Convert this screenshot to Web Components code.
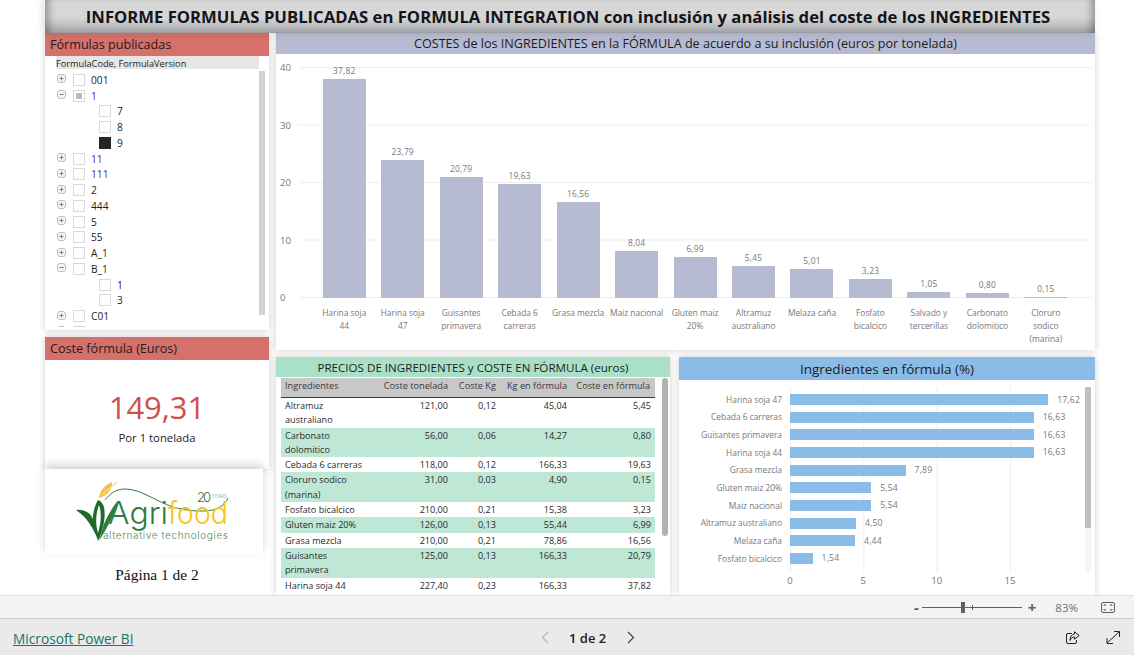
<!DOCTYPE html>
<html lang="es">
<head>
<meta charset="utf-8">
<title>Informe formulas</title>
<style>
    html, body { margin: 0; padding: 0; background: #fff; }
    body { font-family: "Open Sans", "Noto Sans", sans-serif; color: #222; width: 1134px; height: 655px; overflow: hidden; }
</style>
</head>
<body>
<report-canvas>
    <report-title slot="title">INFORME FORMULAS PUBLICADAS en FORMULA INTEGRATION con inclusión y análisis del coste de los INGREDIENTES</report-title>

    <left-column slot="left">
        <visual-panel style="--head-bg:#d5706a; --head-h:23px; --head-size:12.6px; --head-align:flex-start; height:297px">
            <span slot="head">Fórmulas publicadas</span>
            <tree-slicer></tree-slicer>
        </visual-panel>
        <visual-panel style="--head-bg:#d5706a; --head-h:23px; --head-size:12.6px; --head-align:flex-start; height:132px">
            <span slot="head">Coste fórmula (Euros)</span>
            <kpi-card value="149,31" note="Por 1 tonelada"></kpi-card>
        </visual-panel>
        <logo-card></logo-card>
        <page-note>Página 1 de 2</page-note>
    </left-column>

    <visual-panel slot="top" style="--head-bg:#b7bbd1; --head-h:21px; --head-size:12.6px; height:317px">
        <span slot="head">COSTES de los INGREDIENTES en la FÓRMULA de acuerdo a su inclusión (euros por tonelada)</span>
        <column-chart></column-chart>
    </visual-panel>

    <visual-panel slot="table" style="--head-bg:#a9e0c7; --head-h:20px; --head-size:11.6px; width:394px; height:238px">
        <span slot="head">PRECIOS DE INGREDIENTES y COSTE EN FÓRMULA (euros)</span>
        <cost-table></cost-table>
    </visual-panel>

    <visual-panel slot="bars" style="--head-bg:#8bbce8; --head-h:23px; --head-size:13.5px; width:416px; height:238px">
        <span slot="head">Ingredientes en fórmula (%)</span>
        <bar-chart></bar-chart>
    </visual-panel>
</report-canvas>
<zoom-bar></zoom-bar>
<page-footer></page-footer>

<script>
const define = (name, css, html, setup) => {
    customElements.define(name, class extends HTMLElement {
        connectedCallback() {
            if (this.shadowRoot) return
            const root = this.attachShadow({ mode: 'open' })
            root.innerHTML = `<style>${css}</style>${html}`
            if (setup) setup(root, this)
        }
    })
}

define('report-canvas', `
    :host { display: grid; grid-template-columns: 224px 819px; column-gap: 7px; grid-template-rows: 33px 317px 245px; width: 1050px; height: 595px; margin-left: 45px; }
    .title { grid-column: 1 / 3; }
    .left { grid-row: 2 / 4; grid-column: 1; }
    .top { grid-column: 2; }
    .bottom { grid-column: 2; display: flex; gap: 9px; padding-top: 7px; height: 238px; }
`, `
    <div class="title"><slot name="title"></slot></div>
    <div class="left"><slot name="left"></slot></div>
    <div class="top"><slot name="top"></slot></div>
    <div class="bottom"><slot name="table"></slot><slot name="bars"></slot></div>
`)

define('report-title', `
    :host { display: flex; align-items: center; justify-content: center; height: 33px; white-space: nowrap; padding-right: 4px;
        font-size: 16.68px; font-weight: 700; color: #14151a; position: relative; z-index: 2;
        background: linear-gradient(#d8d8d8 0, #d6d6d6 55%, #a2a3a7 100%);
        box-shadow: inset 9px 0 9px -6px rgba(0,0,0,.35), inset -9px 0 9px -6px rgba(0,0,0,.35), -3px 0 8px rgba(0,0,0,.12); }
`, `<slot></slot>`)

define('left-column', `
    :host { display: flex; flex-direction: column; gap: 7px; height: 562px; }
    ::slotted(*) { flex: none; }
    ::slotted(logo-card) { margin-top: -7px; }
    ::slotted(page-note) { margin-top: -7px; }
`, `<slot></slot>`)

define('visual-panel', `
    :host { display: flex; flex-direction: column; background: #fff; box-shadow: 0 0 7px rgba(0,0,0,.2); overflow: hidden; }
    header { flex: none; height: var(--head-h); background: var(--head-bg); display: flex; align-items: center;
        justify-content: var(--head-align, center); padding: 0 5px; font-size: var(--head-size); color: #1d1d22; white-space: nowrap; }
    main { flex: 1; min-height: 0; }
`, `<header><slot name="head"></slot></header><main><slot></slot></main>`)

const plus = '<svg width="9" height="9" viewBox="0 0 9 9"><rect x=".5" y=".5" width="8" height="8" rx="2.5" fill="#f4f4f4" stroke="#bdbdbd"/><path d="M2.5 4.5h4M4.5 2.5v4" stroke="#808080"/></svg>'
const minus = '<svg width="9" height="9" viewBox="0 0 9 9"><rect x=".5" y=".5" width="8" height="8" rx="2.5" fill="#f4f4f4" stroke="#bdbdbd"/><path d="M2.5 4.5h4" stroke="#808080"/></svg>'

const treeRows = [
    ['001', 0, 'plus'], ['1', 0, 'minus', 'part', 'v'], ['7', 1], ['8', 1], ['9', 1, '', 'on'],
    ['11', 0, 'plus', '', 'v'], ['111', 0, 'plus', '', 'v'], ['2', 0, 'plus'], ['444', 0, 'plus'], ['5', 0, 'plus'],
    ['55', 0, 'plus'], ['A_1', 0, 'plus'], ['B_1', 0, 'minus'], ['1', 1], ['3', 1], ['C01', 0, 'plus'], ['', 0, 'plus']
]

define('tree-slicer', `
    :host { display: grid; grid-template-columns: 203px 6px; padding-left: 11px; height: 274px; overflow: hidden; grid-template-rows: 13px 1fr; font-size: 10.2px; color: #1f1f1f; }
    .cap { grid-column: 1; background: #e6e6e6; line-height: 15px; height: 13px; font-size: 9.2px; white-space: nowrap; }
    .list { grid-column: 1; grid-row: 2; padding: 3px 0 0 1px; height: 255px; overflow: hidden; }
    .bar { grid-column: 2; grid-row: 2; margin-top: 2px; height: 244px; background: #d2d2d2; }
    .row { display: flex; align-items: center; height: 15.75px; }
    .row.child { padding-left: 42px; }
    .exp { width: 9px; height: 9px; margin-right: 7px; display: flex; margin-top: -2px; }
    .box { width: 10px; height: 10px; border: 1px solid #d9d9d9; margin-right: 6px; display: flex; align-items: center; justify-content: center; }
    .box.part::after { content: ''; width: 6px; height: 6px; background: #bdbdbd; }
    .box.on { background: #252525; border-color: #252525; }
    .v { color: #4d2a80; }
`, `
    <div class="cap">FormulaCode, FormulaVersion</div>
    <div class="list"></div>
    <div class="bar"></div>
`, root => {
    const list = root.querySelector('.list')
    treeRows.forEach(([text, child, exp, state, tone]) => {
        const row = document.createElement('div')
        row.className = child ? 'row child' : 'row'
        const icon = exp === 'plus' ? plus : exp === 'minus' ? minus : ''
        row.innerHTML = `${child ? '' : `<span class="exp">${icon}</span>`}<span class="box ${state || ''}"></span><span class="${tone || ''}">${text}</span>`
        list.appendChild(row)
    })
})

define('kpi-card', `
    :host { display: flex; flex-direction: column; align-items: center; padding-top: 27px; }
    b { font-weight: 400; font-size: 31px; line-height: 40px; color: #cf5049; }
    span { font-size: 11.3px; line-height: 16px; color: #222; margin-top: 3px; }
`, `<b></b><span></span>`, (root, host) => {
    root.querySelector('b').textContent = host.getAttribute('value')
    root.querySelector('span').textContent = host.getAttribute('note')
})

define('logo-card', `
    :host { display: block; width: 218px; height: 86px; background: #fff; position: relative; box-shadow: 0 -4px 8px rgba(0,0,0,.18); }
    svg { display: block; }
    text { font-family: "Inter", "Liberation Sans", sans-serif; font-weight: 300; }
`, `
    <svg width="218" height="86" viewBox="0 0 218 86">
        <path d="M60 31C65 25 70 20 80 20C96 20 110 32 128 38C142 42 156 43 168 41C175 39 180 35 183 29" fill="none" stroke="#2f7d3b" stroke-width="1"/>
        <path d="M54 29C55 21 60 16 67 13C68 20 62 27 54 29Z" fill="#f0c24a"/>
        <path d="M58 25L72 13" stroke="#f6dc8e" stroke-width="1.5"/>
        <path d="M31 41C38 40 44 43 47 48C50 54 52 62 53 70C48 60 43 49 31 41Z" fill="#1f6b2a"/>
        <path d="M53 31C48 40 46 52 50 62L53 72C58 62 61 48 59 38C58 35 56 32 53 31ZM54 36C57 44 56 54 53 64C50 54 51 44 54 36Z" fill="#1f6b2a"/>
        <path d="M59 55C63 46 68 37 73 32C70 43 64 56 54 72Z" fill="#2f7d3b"/>
        <text x="63" y="55" font-size="31" textLength="60" lengthAdjust="spacingAndGlyphs" fill="#2e7f3d">Agri</text>
        <text x="123" y="55" font-size="31" textLength="60" lengthAdjust="spacingAndGlyphs" fill="#f6c51c">food</text>
        <text x="58" y="70" font-size="10" textLength="125" fill="#4f8a60">alternative technologies</text>
        <text x="152" y="33" font-size="13" textLength="14" fill="#2f6f3c">20</text>
        <text x="167" y="29" font-size="4.6" textLength="15" fill="#6a9a75">YEARS</text>
    </svg>
`)

define('page-note', `
    :host { display: block; font-family: "Liberation Serif", serif; font-size: 15.4px; line-height: 40px; text-align: center; color: #111; }
`, `<slot></slot>`)

const costs = [
    ['Harina soja\n44', 37.82], ['Harina soja\n47', 23.79], ['Guisantes\nprimavera', 20.79], ['Cebada 6\ncarreras', 19.63],
    ['Grasa mezcla', 16.56], ['Maiz nacional', 8.04], ['Gluten maiz\n20%', 6.99], ['Altramuz\naustraliano', 5.45],
    ['Melaza caña', 5.01], ['Fosfato\nbicalcico', 3.23], ['Salvado y\ntercerillas', 1.05], ['Carbonato\ndolomitico', 0.80], ['Cloruro\nsodico\n(marina)', 0.15]
]
const fmt = n => n.toFixed(2).replace('.', ',')

define('column-chart', `
    :host { display: grid; grid-template-columns: 23px 793px; grid-template-rows: 231px auto; padding-top: 13px; height: 283px; font-size: 8.4px; color: #777; }
    .yaxis { display: flex; flex-direction: column; justify-content: space-between; height: 231px; font-size: 9.6px; padding-left: 4px; }
    .yaxis span { height: 1px; line-height: 1px; }
    .plot { display: grid; grid-template-columns: repeat(13, 58.47px); grid-template-rows: 231px; padding: 0 17px 0 16px; height: 231px;
        background: linear-gradient(#eeeeee 1px, transparent 1px) 0 0 / 100% 57.5px; }
    .col { display: flex; flex-direction: column; align-items: center; justify-content: flex-end; height: 231px; }
    .col i { display: block; flex: none; width: 43px; background: #b7bbd1; }
    .col span { flex: none; line-height: 11px; margin-bottom: 3px; letter-spacing: .2px; }
    .labels { grid-column: 2; display: grid; grid-template-columns: repeat(13, 58.47px); padding: 9px 17px 0 16px; }
    .labels span { white-space: pre-line; text-align: center; line-height: 12.8px; }
`, `<div class="yaxis"><span>40</span><span>30</span><span>20</span><span>10</span><span>0</span></div><div class="plot"></div><div class="labels"></div>`, root => {
    const plot = root.querySelector('.plot')
    const labels = root.querySelector('.labels')
    costs.forEach(([name, value]) => {
        plot.insertAdjacentHTML('beforeend', `<div class="col"><span>${fmt(value)}</span><i style="height:${value * 5.8}px"></i></div>`)
        const label = document.createElement('span')
        label.textContent = name
        labels.appendChild(label)
    })
})

const priceRows = [
    ['Altramuz\naustraliano', '121,00', '0,12', '45,04', '5,45'],
    ['Carbonato\ndolomitico', '56,00', '0,06', '14,27', '0,80'],
    ['Cebada 6 carreras', '118,00', '0,12', '166,33', '19,63'],
    ['Cloruro sodico\n(marina)', '31,00', '0,03', '4,90', '0,15'],
    ['Fosfato bicalcico', '210,00', '0,21', '15,38', '3,23'],
    ['Gluten maiz 20%', '126,00', '0,13', '55,44', '6,99'],
    ['Grasa mezcla', '210,00', '0,21', '78,86', '16,56'],
    ['Guisantes\nprimavera', '125,00', '0,13', '166,33', '20,79'],
    ['Harina soja 44', '227,40', '0,23', '166,33', '37,82']
]

define('cost-table', `
    :host { display: flex; gap: 7px; padding: 1px 0 0 5px; height: 217px; overflow: hidden; font-size: 9.1px; color: #2a2a2a; }
    table { border-collapse: collapse; table-layout: fixed; width: 374px; height: max-content; }
    th { background: #c8c8c8; font-weight: 400; height: 15px; padding: 0 2px 4px; text-align: right; border-bottom: 1px solid #2f3556; color: #3a3a3a; white-space: nowrap; font-size: 9.2px; }
    th:first-child, td:first-child { text-align: left; padding-left: 4px; }
    th:last-child { padding-right: 5px; }
    td { padding: 1px 2px 0; line-height: 14.3px; text-align: right; vertical-align: top; white-space: pre-line; }
    td:last-child { padding-right: 4px; }
    tbody tr:nth-child(even) td { background: #bee7d6; }
    .bar { flex: none; width: 6px; height: 158px; border-radius: 3px; background: #b2b2b2; }
`, `
    <table>
        <colgroup><col style="width:96px"><col style="width:73px"><col style="width:48px"><col style="width:71px"><col style="width:86px"></colgroup>
        <thead><tr><th>Ingredientes</th><th>Coste tonelada</th><th>Coste Kg</th><th>Kg en fórmula</th><th>Coste en fórmula</th></tr></thead>
        <tbody></tbody>
    </table>
    <div class="bar"></div>
`, root => {
    const body = root.querySelector('tbody')
    priceRows.forEach(cells => {
        const tr = document.createElement('tr')
        cells.forEach(text => {
            const td = document.createElement('td')
            td.textContent = text
            tr.appendChild(td)
        })
        body.appendChild(tr)
    })
})

const shares = [
    ['Harina soja 47', 17.62], ['Cebada 6 carreras', 16.63], ['Guisantes primavera', 16.63], ['Harina soja 44', 16.63], ['Grasa mezcla', 7.89],
    ['Gluten maiz 20%', 5.54], ['Maiz nacional', 5.54], ['Altramuz australiano', 4.50], ['Melaza caña', 4.44], ['Fosfato bicalcico', 1.54]
]

define('bar-chart', `
    :host { display: grid; grid-template-columns: 103px 302px 6px; grid-template-rows: 185px auto; padding-top: 7px; font-size: 8.4px; color: #777; }
    .names { display: flex; flex-direction: column; padding-top: 3.7px; text-align: right; white-space: nowrap; }
    .names span, .row { height: 17.67px; line-height: 17px; }
    .plot { margin-left: 8px; padding-top: 3.7px; height: 181.3px; width: 293px; background: linear-gradient(90deg, #eeeeee 1px, transparent 1px) 0 0 / 73.33px 100%; }
    .row { display: flex; align-items: center; gap: 9px; }
    .row i { display: block; height: 11px; background: #8bbce8; }
    .row span { letter-spacing: .2px; font-size: 8.6px; padding-top: 1px; }
    .track { grid-column: 3; margin-left: 1px; width: 6px; height: 185px; background: #f5f5f5; }
    .track div { height: 141px; background: #c0c0c0; }
    .ticks { grid-column: 2; display: flex; margin-left: -28.67px; padding-top: 2px; font-size: 9.6px; }
    .ticks span { width: 73.33px; text-align: center; }
`, `
    <div class="names"></div>
    <div class="plot"></div>
    <div class="track"><div></div></div>
    <div class="ticks"><span>0</span><span>5</span><span>10</span><span>15</span></div>
`, root => {
    const names = root.querySelector('.names')
    const plot = root.querySelector('.plot')
    shares.forEach(([name, value]) => {
        names.insertAdjacentHTML('beforeend', `<span>${name}</span>`)
        plot.insertAdjacentHTML('beforeend', `<div class="row"><i style="width:${value * 14.65}px"></i><span>${fmt(value)}</span></div>`)
    })
})

define('zoom-bar', `
    :host { display: flex; align-items: center; justify-content: flex-end; box-sizing: border-box; height: 24px; background: #f3f3f3; border-top: 1px solid #dedede; border-bottom: 1px solid #c9c9c9; color: #5f5f5f; padding-right: 19px; position: relative; z-index: 3; }
    .sign { font-size: 15px; font-weight: 700; line-height: 20px; }
    .slider { width: 100px; height: 11px; margin: 0 6px 0 3px; display: flex; align-items: center; background: linear-gradient(#606060, #606060) 0 50% / 100% 1px no-repeat; }
    .thumb { width: 4px; height: 11px; background: #606060; margin-left: 39px; }
    .tick { width: 1px; height: 5px; background: #606060; margin-left: 7px; }
    .pct { font-size: 11.5px; margin: 0 23px 0 19px; color: #707070; }
    svg { display: block; }
`, `
    <span class="sign">-</span>
    <div class="slider"><div class="thumb"></div><div class="tick"></div></div>
    <span class="sign">+</span>
    <span class="pct">83%</span>
    <svg width="14" height="11" viewBox="0 0 14 11" fill="none" stroke="#5f5f5f"><rect x=".5" y=".5" width="13" height="10" rx="1.5"/><path d="M3 4V3h2M11 4V3H9M3 7v1h2M11 7v1H9"/></svg>
`)

define('page-footer', `
    :host { display: flex; align-items: center; height: 37px; background: #eaeaea; position: relative; }
    a { font-size: 13.7px; color: #117865; text-decoration: underline; margin-left: 13px; width: 120px; white-space: nowrap; padding-top: 2px; }
    .pager { display: flex; align-items: center; margin-left: 408px; font-size: 13px; font-weight: 600; color: #222; }
    .pager span { margin: 0 20px 0 19px; }
    .tools { display: flex; align-items: center; gap: 26px; margin-left: 431px; }
    svg { display: block; }
`, `
    <a href="#">Microsoft Power BI</a>
    <div class="pager">
        <svg width="9" height="13" viewBox="0 0 9 13" fill="none" stroke="#b5b5b5" stroke-width="1.2"><path d="M7 1L1.5 6.5L7 12"/></svg>
        <span>1 de 2</span>
        <svg width="9" height="13" viewBox="0 0 9 13" fill="none" stroke="#444" stroke-width="1.2"><path d="M2 1L7.5 6.5L2 12"/></svg>
    </div>
    <div class="tools">
        <svg width="14" height="13" viewBox="0 0 14 13" fill="none" stroke="#222" stroke-width="1"><path d="M6 2.5H2a1.500 1.500 0 0 0-1.500 1.500v7a1.500 1.500 0 0 0 1.500 1.500h7a1.500 1.500 0 0 0 1.500-1.500V9"/><path d="M8.500.8L13.200 4.500L8.500 8.200V6C6.500 6 5 7 4 9.500C4 6 5.500 3.200 8.500 3Z"/></svg>
        <svg width="14" height="13" viewBox="0 0 14 13" fill="none" stroke="#222" stroke-width="1"><path d="M1 12L13 1M8 .5h5.500V6M1 7v5.500h6"/></svg>
    </div>
`)
</script>
</body>
</html>
